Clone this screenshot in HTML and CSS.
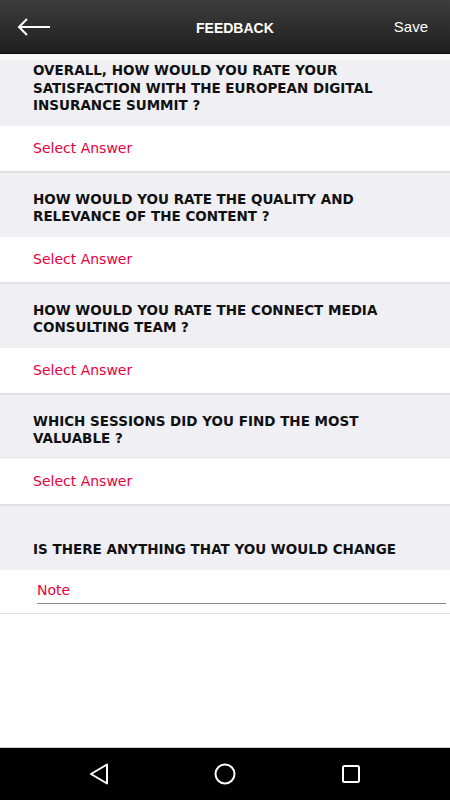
FILE: index.html
```html
<!DOCTYPE html>
<html lang="en">
<head>
    <meta charset="UTF-8">
    <meta name="viewport" content="width=device-width, initial-scale=1.0">
    <title>Feedback</title>
    <link rel="stylesheet" href="styles.css">
</head>
<body>
    <div class="screen">
        <header class="topbar">
            <button class="back-btn" aria-label="Back">
                <svg width="34" height="20" viewBox="0 0 34 20">
                    <path d="M33 10H2M10 2L2 10l8 8" fill="none" stroke="#fff" stroke-width="2"/>
                </svg>
            </button>
            <h1>FEEDBACK</h1>
            <button class="save-btn">Save</button>
        </header>
        <main class="form">
            <div class="spacer"></div>
            <div class="question first">OVERALL, HOW WOULD YOU RATE YOUR SATISFACTION WITH THE EUROPEAN DIGITAL INSURANCE SUMMIT ?</div>
            <div class="answer">Select Answer</div>

            <div class="question">HOW WOULD YOU RATE THE QUALITY AND RELEVANCE OF THE CONTENT ?</div>
            <div class="answer">Select Answer</div>

            <div class="question">HOW WOULD YOU RATE THE CONNECT MEDIA CONSULTING TEAM ?</div>
            <div class="answer">Select Answer</div>

            <div class="question">WHICH SESSIONS DID YOU FIND THE MOST VALUABLE ?</div>
            <div class="answer">Select Answer</div>

            <div class="question">IS THERE ANYTHING THAT YOU WOULD CHANGE</div>
            <div class="note-row">
                <div class="note-field">Note</div>
            </div>
        </main>
        <nav class="navbar">
            <svg width="22" height="22" viewBox="0 0 22 22">
                <path d="M19 1.5v19L3 11z" fill="none" stroke="#fff" stroke-width="2" stroke-linejoin="round"/>
            </svg>
            <svg width="22" height="22" viewBox="0 0 22 22">
                <circle cx="11" cy="11" r="9.5" fill="none" stroke="#fff" stroke-width="2"/>
            </svg>
            <svg width="22" height="22" viewBox="0 0 22 22">
                <rect x="3" y="3" width="16" height="16" rx="1.5" fill="none" stroke="#fff" stroke-width="2"/>
            </svg>
        </nav>
    </div>
</body>
</html>
```

FILE: styles.css
```css
body {
    margin: 0;
    padding: 0;
    background-color: #ffffff;
    font-family: "DejaVu Sans", sans-serif;
}
.screen {
    width: 450px;
    height: 800px;
    display: flex;
    flex-direction: column;
    overflow: hidden;
}
.topbar {
    height: 53px;
    flex-shrink: 0;
    display: flex;
    align-items: center;
    justify-content: space-between;
    padding: 0 22px 0 17px;
    background: linear-gradient(#3d3d3d, #1f1f1f);
    border-bottom: 1px solid #111;
}
.topbar h1 {
    margin: 2px 0 0 25px;
    color: white;
    font-family: "Liberation Sans", Arial, sans-serif;
    font-size: 14px;
    font-weight: bold;
}
.back-btn,
.save-btn {
    background: none;
    border: none;
    padding: 0;
    color: white;
    cursor: pointer;
}
.back-btn svg {
    display: block;
}
.save-btn {
    font-family: "Liberation Sans", Arial, sans-serif;
    font-size: 15px;
}
.form {
    flex: 1;
    min-height: 0;
    background-color: white;
}
.spacer {
    height: 6px;
    background-color: #fafafa;
}
.question {
    min-height: 65px;
    box-sizing: border-box;
    display: flex;
    align-items: flex-end;
    padding: 0 36px 11px 33px;
    background-color: #efeff4;
    color: #111;
    font-size: 13.5px;
    font-weight: bold;
    line-height: 17.5px;
    border-top: 1px solid #e2e2e6;
}
.question.first {
    border-top: none;
    padding-top: 2px;
}
.answer {
    height: 45px;
    display: flex;
    align-items: center;
    padding-left: 33px;
    background-color: white;
    color: #e8003d;
    font-size: 14px;
    border-bottom: 1px solid #e0e0e0;
}
.note-row {
    height: 44px;
    box-sizing: border-box;
    padding: 12px 4px 0 37px;
    background-color: white;
    border-bottom: 1px solid #e0e0e0;
}
.note-field {
    color: #e8003d;
    font-size: 14px;
    padding-bottom: 5px;
    border-bottom: 1px solid #8a8a8a;
}
.navbar {
    height: 52px;
    flex-shrink: 0;
    display: flex;
    align-items: center;
    justify-content: space-between;
    padding: 0 88px;
    background-color: #000;
    border-top: 1px solid #ccc;
}
.navbar svg {
    display: block;
}
```
